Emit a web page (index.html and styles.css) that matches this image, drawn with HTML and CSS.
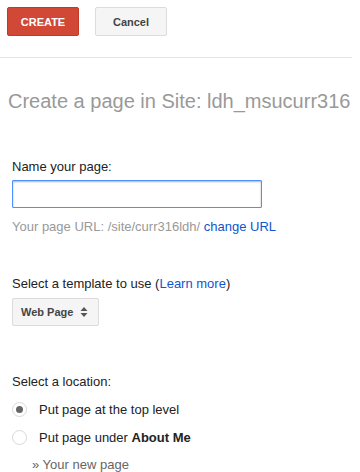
FILE: index.html
```html
<!DOCTYPE html>
<html lang="en">
<head>
  <meta charset="UTF-8">
  <title>Create a page</title>
  <link rel="stylesheet" href="styles.css">
</head>
<body>
  <div class="toolbar">
    <button class="btn btn-create">CREATE</button>
    <button class="btn btn-cancel">Cancel</button>
  </div>
  <div class="divider"></div>

  <h1 class="title">Create a page in Site: ldh_msucurr316</h1>

  <div class="section section-name">
    <label class="label" for="pagename">Name your page:</label>
    <input class="name-input" type="text" id="pagename">
    <div class="url">Your page URL: /site/curr316ldh/ <a href="#">change URL</a></div>
  </div>

  <div class="section section-template">
    <div class="label">Select a template to use (<a href="#">Learn more</a>)</div>
    <div class="select">
      <span>Web Page</span>
      <svg class="arrows" width="8" height="12" viewBox="0 0 8 12">
        <path d="M4 1 L7.5 5 H0.5 Z" fill="#555"/>
        <path d="M4 11 L7.5 7 H0.5 Z" fill="#555"/>
      </svg>
    </div>
  </div>

  <div class="section section-location">
    <div class="label">Select a location:</div>
    <div class="radio-row">
      <span class="radio checked"></span>
      <span>Put page at the top level</span>
    </div>
    <div class="radio-row">
      <span class="radio"></span>
      <span>Put page under <b>About Me</b></span>
    </div>
    <div class="subpage">&raquo; Your new page</div>
  </div>
</body>
</html>
```

FILE: styles.css
```css
body {
  margin: 0;
  font-family: "Liberation Sans", Arial, sans-serif;
  font-size: 13px;
  line-height: 15px;
  color: #222;
  background: #fff;
}

a {
  color: #15c;
  text-decoration: none;
}

.toolbar {
  display: flex;
  gap: 16px;
  padding: 7px 7px 0;
  height: 29px;
}

.btn {
  width: 72px;
  height: 29px;
  border-radius: 2px;
  font-family: "Liberation Sans", Arial, sans-serif;
  font-size: 11px;
  font-weight: bold;
  padding: 0;
}

.btn-create {
  background: #d14836;
  border: 1px solid #c53727;
  color: #fff;
}

.btn-cancel {
  background: #f5f5f5;
  border: 1px solid #dcdcdc;
  color: #444;
}

.divider {
  width: 352px;
  margin-top: 21px;
  border-top: 1px solid #e5e5e5;
}

.title {
  margin: 32px 0 0 8px;
  font-size: 20px;
  line-height: 23px;
  font-weight: normal;
  color: #999;
  white-space: nowrap;
}

.section {
  padding-left: 12px;
}

.label {
  display: block;
}

.section-name .label {
  margin-top: 46px;
}

.name-input {
  display: block;
  box-sizing: border-box;
  width: 250px;
  height: 28px;
  margin-top: 6px;
  border: 1px solid #4d90fe;
  border-radius: 1px;
  box-shadow: inset 0 1px 2px rgba(0, 0, 0, 0.3);
  outline: none;
}

.url {
  margin-top: 11px;
  color: #999;
}

.section-template .label {
  margin-top: 42px;
}

.select {
  display: flex;
  align-items: center;
  justify-content: space-between;
  box-sizing: border-box;
  width: 87px;
  height: 28px;
  margin-top: 7px;
  padding: 0 10px 0 8px;
  background: #f5f5f5;
  border: 1px solid #dcdcdc;
  border-radius: 2px;
  font-size: 11px;
  font-weight: bold;
  color: #444;
}

.section-location .label {
  margin-top: 48px;
}

.radio-row {
  display: flex;
  align-items: center;
  gap: 12px;
  margin-top: 13px;
}

.radio {
  box-sizing: border-box;
  width: 15px;
  height: 15px;
  border: 1px solid #d8d8d8;
  border-radius: 50%;
  background: #fff;
  position: relative;
}

.radio.checked::after {
  content: "";
  position: absolute;
  left: 3px;
  top: 3px;
  width: 7px;
  height: 7px;
  border-radius: 50%;
  background: #666;
}

.subpage {
  margin: 12px 0 0 20px;
  color: #666;
}
```
